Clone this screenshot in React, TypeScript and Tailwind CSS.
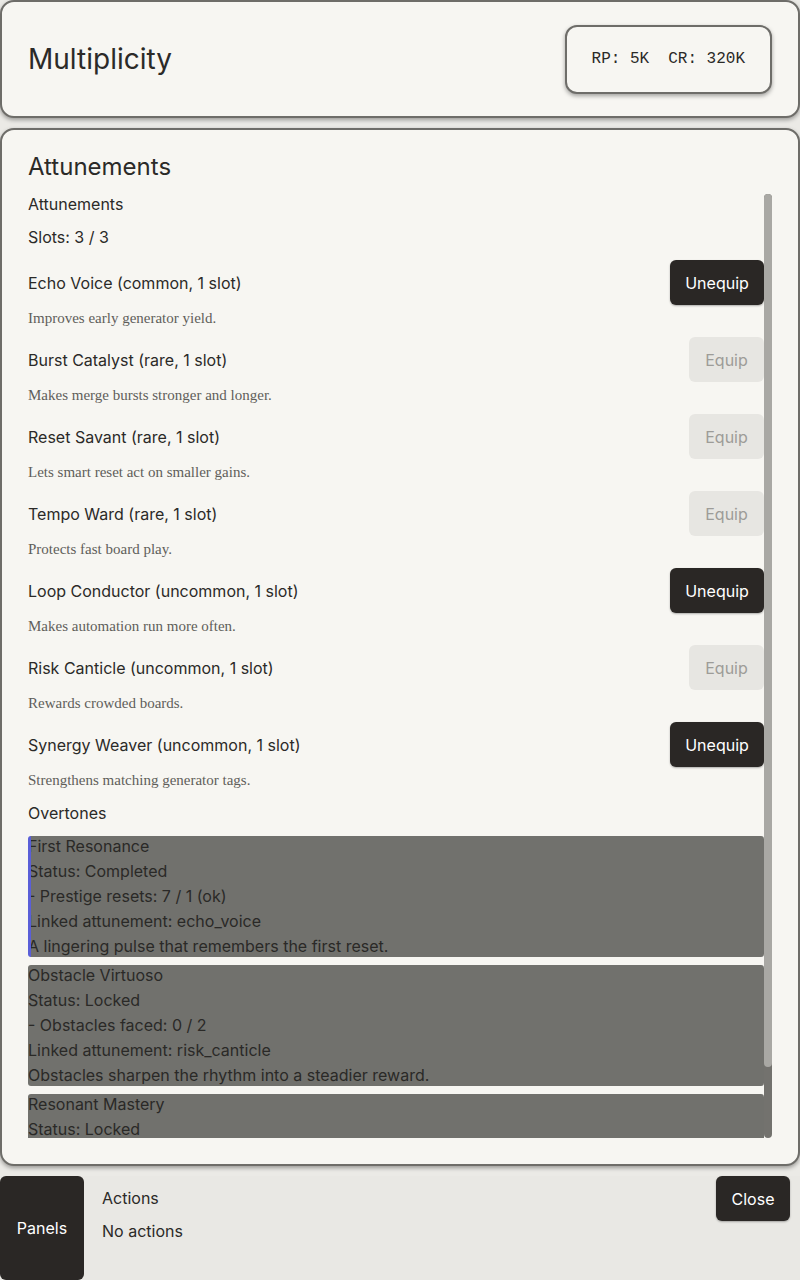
import React from 'react';

type Attunement = {
  name: string;
  desc: string;
  equipped: boolean;
};

const attunements: Attunement[] = [
  { name: 'Echo Voice (common, 1 slot)', desc: 'Improves early generator yield.', equipped: true },
  { name: 'Burst Catalyst (rare, 1 slot)', desc: 'Makes merge bursts stronger and longer.', equipped: false },
  { name: 'Reset Savant (rare, 1 slot)', desc: 'Lets smart reset act on smaller gains.', equipped: false },
  { name: 'Tempo Ward (rare, 1 slot)', desc: 'Protects fast board play.', equipped: false },
  { name: 'Loop Conductor (uncommon, 1 slot)', desc: 'Makes automation run more often.', equipped: true },
  { name: 'Risk Canticle (uncommon, 1 slot)', desc: 'Rewards crowded boards.', equipped: false },
  { name: 'Synergy Weaver (uncommon, 1 slot)', desc: 'Strengthens matching generator tags.', equipped: true },
];

type Overtone = {
  lines: string[];
  active?: boolean;
};

const overtones: Overtone[] = [
  {
    active: true,
    lines: [
      'First Resonance',
      'Status: Completed',
      '- Prestige resets: 7 / 1 (ok)',
      'Linked attunement: echo_voice',
      'A lingering pulse that remembers the first reset.',
    ],
  },
  {
    lines: [
      'Obstacle Virtuoso',
      'Status: Locked',
      '- Obstacles faced: 0 / 2',
      'Linked attunement: risk_canticle',
      'Obstacles sharpen the rhythm into a steadier reward.',
    ],
  },
  {
    lines: ['Resonant Mastery', 'Status: Locked'],
  },
];

const sans = "font-['Inter','Noto_Sans',sans-serif]";

function AttunementRow({ item }: { item: Attunement }) {
  return (
    <div className="mb-[9px]">
      <div className="flex h-[45px] items-center justify-between">
        <span className="text-[16px] leading-5 text-[#2b2a28]">{item.name}</span>
        {item.equipped ? (
          <button className="h-[45px] w-[94px] rounded-md bg-[#2a2725] text-[16px] text-white shadow-[0_1px_2px_rgba(0,0,0,0.3)]">
            Unequip
          </button>
        ) : (
          <button className="h-[45px] w-[75px] rounded-md bg-[#e7e6e2] text-[16px] text-[#9d9c98]">
            Equip
          </button>
        )}
      </div>
      <p className="mt-[3px] font-['Liberation_Serif','DejaVu_Serif',serif] text-[15px] leading-5 text-[#5f5e5a]">
        {item.desc}
      </p>
    </div>
  );
}

function OvertoneCard({ item }: { item: Overtone }) {
  return (
    <div
      className={
        item.active
          ? 'h-[121px] shrink-0 overflow-hidden rounded-[3px] border-l-[3px] border-[#5a5fd8] bg-[#71716d]'
          : 'h-[121px] shrink-0 overflow-hidden rounded-[3px] bg-[#71716d]'
      }
    >
      <div className={item.active ? '-ml-[3px] -mt-[2px]' : '-mt-[2px]'}>
        {item.lines.map((line) => (
          <div key={line} className="text-[16px] leading-[25px] text-[#2a2927]">
            {line}
          </div>
        ))}
      </div>
    </div>
  );
}

export default function App() {
  return (
    <div className={`${sans} flex min-h-[1280px] flex-col bg-[#ebeae6]`}>
      {/* header card */}
      <header className="flex h-[118px] items-center justify-between rounded-[14px] border-2 border-[#6e6d69] bg-[#f7f6f2] px-[26px] shadow-[0_2px_4px_rgba(0,0,0,0.35)]">
        <h1 className="text-[28px] font-normal leading-8 text-[#2b2a28]">Multiplicity</h1>
        <div className="flex h-[69px] items-center gap-[19px] rounded-[12px] border-2 border-[#6e6d69] bg-[#f7f6f2] px-[25px] font-['Liberation_Mono','DejaVu_Sans_Mono',monospace] text-[16px] text-[#2b2a28] shadow-[0_2px_4px_rgba(0,0,0,0.35)]">
          <span>RP: 5K</span>
          <span>CR: 320K</span>
        </div>
      </header>

      {/* attunements panel */}
      <section className="mt-[10px] flex h-[1038px] flex-col rounded-[14px] border-2 border-[#6e6d69] bg-[#f7f6f2] px-[26px] pb-[26px] pt-[21px] shadow-[0_2px_4px_rgba(0,0,0,0.35)]">
        <h2 className="text-[24px] font-normal leading-8 text-[#2b2a28]">Attunements</h2>
        <div className="mt-[11px] flex h-[944px]">
          <div className="min-w-0 flex-1 overflow-hidden">
            <div className="text-[16px] leading-5 text-[#2b2a28]">Attunements</div>
            <div className="mb-[13px] mt-[13px] text-[16px] leading-5 text-[#2b2a28]">Slots: 3 / 3</div>
            {attunements.map((a) => (
              <AttunementRow key={a.name} item={a} />
            ))}
            <div className="mt-[13px] text-[16px] leading-5 text-[#2b2a28]">Overtones</div>
            <div className="mt-[13px] flex flex-col gap-2">
              {overtones.map((o) => (
                <OvertoneCard key={o.lines[0]} item={o} />
              ))}
            </div>
          </div>
          {/* scrollbar */}
          <div className="w-2 shrink-0 rounded-full bg-[#73726e]">
            <div className="h-[873px] rounded-full bg-[#a9a8a4]" />
          </div>
        </div>
      </section>

      {/* action bar */}
      <footer className="mt-[10px] flex flex-1 items-start bg-[#e9e8e4]">
        <button className="h-[104px] w-[84px] rounded-md bg-[#2a2725] text-[16px] text-white">Panels</button>
        <div className="ml-[18px] pt-[12px] text-[16px] leading-5 text-[#2b2a28]">
          <div>Actions</div>
          <div className="mt-[13px]">No actions</div>
        </div>
        <button className="ml-auto mr-[10px] h-[45px] w-[74px] rounded-md bg-[#2a2725] text-[16px] text-white shadow-[0_1px_2px_rgba(0,0,0,0.3)]">
          Close
        </button>
      </footer>
    </div>
  );
}
